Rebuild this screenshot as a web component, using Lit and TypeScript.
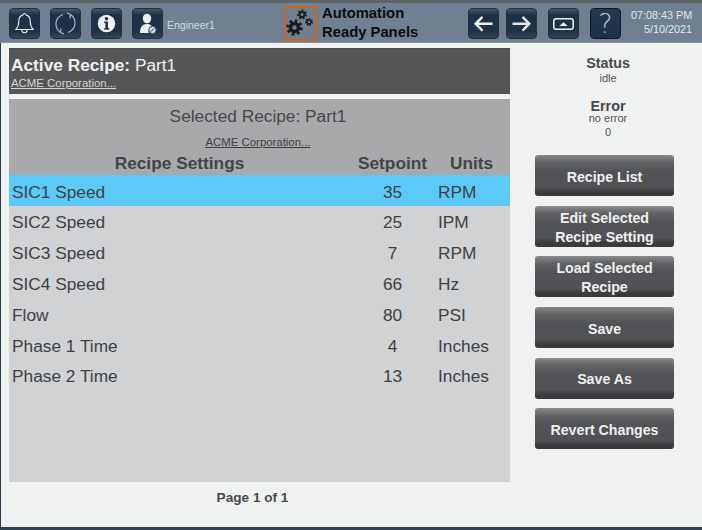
import { LitElement, html, css, svg } from "lit";
import { customElement } from "lit/decorators.js";

const rows = [
  ["SIC1 Speed", "35", "RPM"],
  ["SIC2 Speed", "25", "IPM"],
  ["SIC3 Speed", "7", "RPM"],
  ["SIC4 Speed", "66", "Hz"],
  ["Flow", "80", "PSI"],
  ["Phase 1 Time", "4", "Inches"],
  ["Phase 2 Time", "13", "Inches"],
];

const gear = (cx: number, cy: number, r: number, hole: number, w: number, teeth: number) => {
  const tr = r + w * 0.4;
  const seg = (2 * Math.PI * tr) / (teeth * 2);
  return svg`
    <circle cx=${cx} cy=${cy} r=${(r + hole) / 2} fill="none" stroke="#1a1a1a" stroke-width=${r - hole}/>
    <circle cx=${cx} cy=${cy} r=${tr} fill="none" stroke="#1a1a1a" stroke-width=${w * 1.6} stroke-dasharray=${`${seg} ${seg}`}/>
  `;
};

const icons = {
  bell: html`<svg viewBox="0 0 31 31" width="31" height="31" fill="none" stroke="#e6ebee" stroke-width="1.1"><path d="M15.500 5.500c-.9 0-1.400.6-1.500 1.400-3 .8-4.200 3.200-4.200 6.300 0 3.600-1 6-3 8.300h17.400c-2-2.300-3-4.700-3-8.300 0-3.100-1.200-5.500-4.200-6.300-.1-.8-.6-1.400-1.500-1.400z"/><path d="M12.800 21.800c0 1.800 1.200 3 2.700 3s2.700-1.200 2.700-3"/></svg>`,
  sync: html`<svg viewBox="0 0 31 31" width="31" height="31" fill="none" stroke="#aeb9c1" stroke-width="1.200"><path d="M10.500 24.500C7.500 22.500 6 19.500 6 16c0-4.500 3-8 7-9.500"/><path d="M20.500 6.500C23.500 8.500 25 11.500 25 15c0 4.500-3 8-7 9.500"/><path d="M17 5l3.500 1.500L20 10.500M14 26l-3.500-1.500.5-4"/></svg>`,
  info: html`<svg viewBox="0 0 31 31" width="31" height="31"><circle cx="15.500" cy="15.500" r="8.700" fill="#eef1f3"/><circle cx="15.500" cy="10.800" r="1.700" fill="#1f3246"/><path d="M13.300 13.600h3.700v6.600h1.300v1.600h-5.100v-1.600h1.200v-5h-1.100z" fill="#1f3246"/></svg>`,
  user: html`<svg viewBox="0 0 31 31" width="31" height="31"><ellipse cx="15" cy="10.500" rx="4.200" ry="4.800" fill="#eef1f3"/><path d="M8 25c0-6 2.500-9 7-9 2 0 3.500.5 4.600 1.700-2.500 1-3.800 4.500-2.600 7.300z" fill="#eef1f3"/><circle cx="20.500" cy="22" r="3.700" fill="#d5dbdf" stroke="#1f3246" stroke-width=".8"/><path d="M18.800 23.700l3.300-3.400" stroke="#1f3246" stroke-width="1"/></svg>`,
  left: html`<svg viewBox="0 0 31 31" width="31" height="31" fill="none" stroke="#f1f4f5" stroke-width="2.400"><path d="M24.500 15.700H8M14.500 8.800l-6.900 6.900 6.900 6.900"/></svg>`,
  right: html`<svg viewBox="0 0 31 31" width="31" height="31" fill="none" stroke="#dfe4e7" stroke-width="2.400"><path d="M6.500 15.700H23M16.500 8.800l6.900 6.900-6.900 6.900"/></svg>`,
  kbd: html`<svg viewBox="0 0 31 31" width="31" height="31"><rect x="5.800" y="10.800" width="19.400" height="10.400" rx="2.300" fill="none" stroke="#eef1f3" stroke-width="1.500"/><path d="M11.500 18h8l-4-3.800z" fill="#eef1f3"/></svg>`,
};

@customElement("app-root")
export class AppRoot extends LitElement {
  static styles = css`
    :host { display: block; width: 702px; height: 530px; font-family: "Liberation Sans", Arial, sans-serif; color: #404144; overflow: hidden; }
    .frame { box-sizing: border-box; width: 702px; height: 530px; display: flex; flex-direction: column; background: #f0f2f1; border-left: 1px solid #243a4f; border-bottom: 3px solid #2f4152; }
    .top { height: 43px; flex: none; box-sizing: border-box; margin-left: -1px; background: #6f8092; border-top: 3px solid #5f6468; border-bottom: 1px solid #8494a3; display: flex; align-items: center; padding: 1px 0 0 9px; }
    .ib { box-sizing: border-box; width: 31px; height: 31px; flex: none; border-radius: 4px; border: 1px solid #2b2f33; background: linear-gradient(#45566a 0%, #1c3146 22%, #1e3349 78%, #3a4652 100%); display: flex; align-items: center; justify-content: center; }
    .ib svg { flex: none; margin: -1px; }
    .ib.dark { border-color: #15181b; background: linear-gradient(#22384d, #1d3247); color: #b4c0c9; font-family: "DejaVu Sans", sans-serif; font-weight: 200; font-size: 27px; }
    .g10 { margin-left: 10px; }
    .g8 { margin-left: 7px; }
    .g11 { margin-left: 11px; }
    .user { color: #d4dae0; font-size: 10.500px; margin: 3px 0 0 4px; width: 117px; flex: none; }
    .logo { box-sizing: border-box; width: 33px; height: 35px; flex: none; border: 2px solid #d0631a; display: flex; align-items: center; justify-content: center; }
    .brand { width: 146px; flex: none; margin-left: 5px; color: #0b0b0b; font-size: 14.800px; font-weight: 700; line-height: 19px; margin-top: -1px; white-space: nowrap; }
    .time { margin: -2px 0 0 10px; width: 61px; flex: none; text-align: right; color: #e1e6ea; font-size: 10.800px; line-height: 14px; white-space: nowrap; }
    .body { flex: 1; display: flex; min-height: 0; }
    .left { width: 501px; flex: none; margin-left: 8px; padding-top: 5px; display: flex; flex-direction: column; }
    .active { height: 46px; box-sizing: border-box; flex: none; background: #555658; color: #f1f1f1; padding: 6px 2px 0; border-top: 1px solid #4c4d4f; }
    .active .t { font-size: 17.300px; line-height: 20px; white-space: nowrap; }
    .active .l { font-size: 11.400px; line-height: 14px; color: #d6d6d6; text-decoration: underline; margin-top: 1px; }
    .sel { height: 76px; flex: none; margin-top: 5px; background: #a9a9ac; display: flex; flex-direction: column; }
    .sel .t { text-align: center; font-size: 17.300px; line-height: 20px; margin-top: 7px; padding-right: 3px; color: #47484b; }
    .sel .l { text-align: center; font-size: 11.400px; line-height: 13px; margin-top: 10px; text-decoration: underline; padding-right: 3px; color: #3f4043; }
    .hd { display: grid; grid-template-columns: 341px 83px 1fr; font-size: 17.300px; font-weight: 700; line-height: 20px; margin-top: 4px; color: #434447; }
    .hd div:nth-child(1) { text-align: center; }
    .hd div:nth-child(2) { text-align: center; padding-left: 2px; }
    .hd div:nth-child(3) { padding-left: 17px; }
    .table { flex: 1; background: #d1d2d4; }
    .row { display: grid; height: 30.800px; align-items: center; font-size: 17.300px; color: #404144; padding: 3.500px 0 0 3px; box-sizing: border-box; grid-template-columns: 338px 85px 1fr; }
    .row.on { background: #5ccaf8; }
    .row div:nth-child(2) { text-align: center; }
    .row div:nth-child(3) { padding-left: 3px; }
    .pager { height: 45px; flex: none; box-sizing: border-box; text-align: center; font-size: 13.600px; font-weight: 700; line-height: 16px; padding: 8px 14px 0 0; color: #47484b; }
    .side { flex: 1; display: flex; flex-direction: column; box-sizing: border-box; }
    .stat { display: flex; flex-direction: column; align-items: center; color: #47484b; padding-left: 4px; }
    .stat b { font-size: 14.300px; line-height: 15px; }
    .stat span { font-size: 11px; line-height: 14px; color: #535456; }
    .s1 { margin-top: 13px; }
    .s2 { margin-top: 15px; }
    .s2 b { line-height: 13px; }
    .s2 span:nth-child(2) { line-height: 10px; }
    .s2 span:nth-child(3) { margin-top: 2px; }
    .btns { display: flex; flex-direction: column; margin: 16px 0 0 25px; gap: 9.700px; }
    .btn { box-sizing: border-box; width: 139px; height: 41px; border-radius: 3px; background: linear-gradient(#8a8b8d 0%, #616264 18%, #525356 40%, #515255 78%, #3b3c3e 90%, #39393b 100%); color: #f0f0f0; font-size: 14.200px; font-weight: 700; line-height: 19px; text-align: center; display: flex; align-items: center; justify-content: center; padding-top: 3px; white-space: nowrap; }
  `;

  render() {
    return html`<div class="frame">
      <div class="top">
        <div class="ib">${icons.bell}</div>
        <div class="ib g10">${icons.sync}</div>
        <div class="ib g10">${icons.info}</div>
        <div class="ib g10">${icons.user}</div>
        <div class="user">Engineer1</div>
        <div class="logo">
          <svg viewBox="0 0 29 31" width="29" height="31">
            ${gear(8.500, 19.500, 5.800, 2.200, 2, 8)}
            ${gear(16, 6.500, 3.400, 1.500, 1.300, 7)}
            ${gear(23, 14, 2.700, 1.200, 1.100, 7)}
          </svg>
        </div>
        <div class="brand">Automation<br />Ready Panels</div>
        <div class="ib">${icons.left}</div>
        <div class="ib g8">${icons.right}</div>
        <div class="ib g11">${icons.kbd}</div>
        <div class="ib g11 dark">?</div>
        <div class="time">07:08:43 PM<br />5/10/2021</div>
      </div>
      <div class="body">
        <div class="left">
          <div class="active">
            <div class="t"><b>Active Recipe:</b> Part1</div>
            <div class="l">ACME Corporation...</div>
          </div>
          <div class="sel">
            <div class="t">Selected Recipe: Part1</div>
            <div class="l">ACME Corporation...</div>
            <div class="hd"><div>Recipe Settings</div><div>Setpoint</div><div>Units</div></div>
          </div>
          <div class="table">
            ${rows.map(
              (r, i) => html`<div class="row ${i === 0 ? "on" : ""}"><div>${r[0]}</div><div>${r[1]}</div><div>${r[2]}</div></div>`
            )}
          </div>
          <div class="pager">Page 1 of 1</div>
        </div>
        <div class="side">
          <div class="stat s1"><b>Status</b><span>idle</span></div>
          <div class="stat s2"><b>Error</b><span>no error</span><span>0</span></div>
          <div class="btns">
            <div class="btn">Recipe List</div>
            <div class="btn">Edit Selected<br />Recipe Setting</div>
            <div class="btn">Load Selected<br />Recipe</div>
            <div class="btn">Save</div>
            <div class="btn">Save As</div>
            <div class="btn">Revert Changes</div>
          </div>
        </div>
      </div>
    </div>`;
  }
}
